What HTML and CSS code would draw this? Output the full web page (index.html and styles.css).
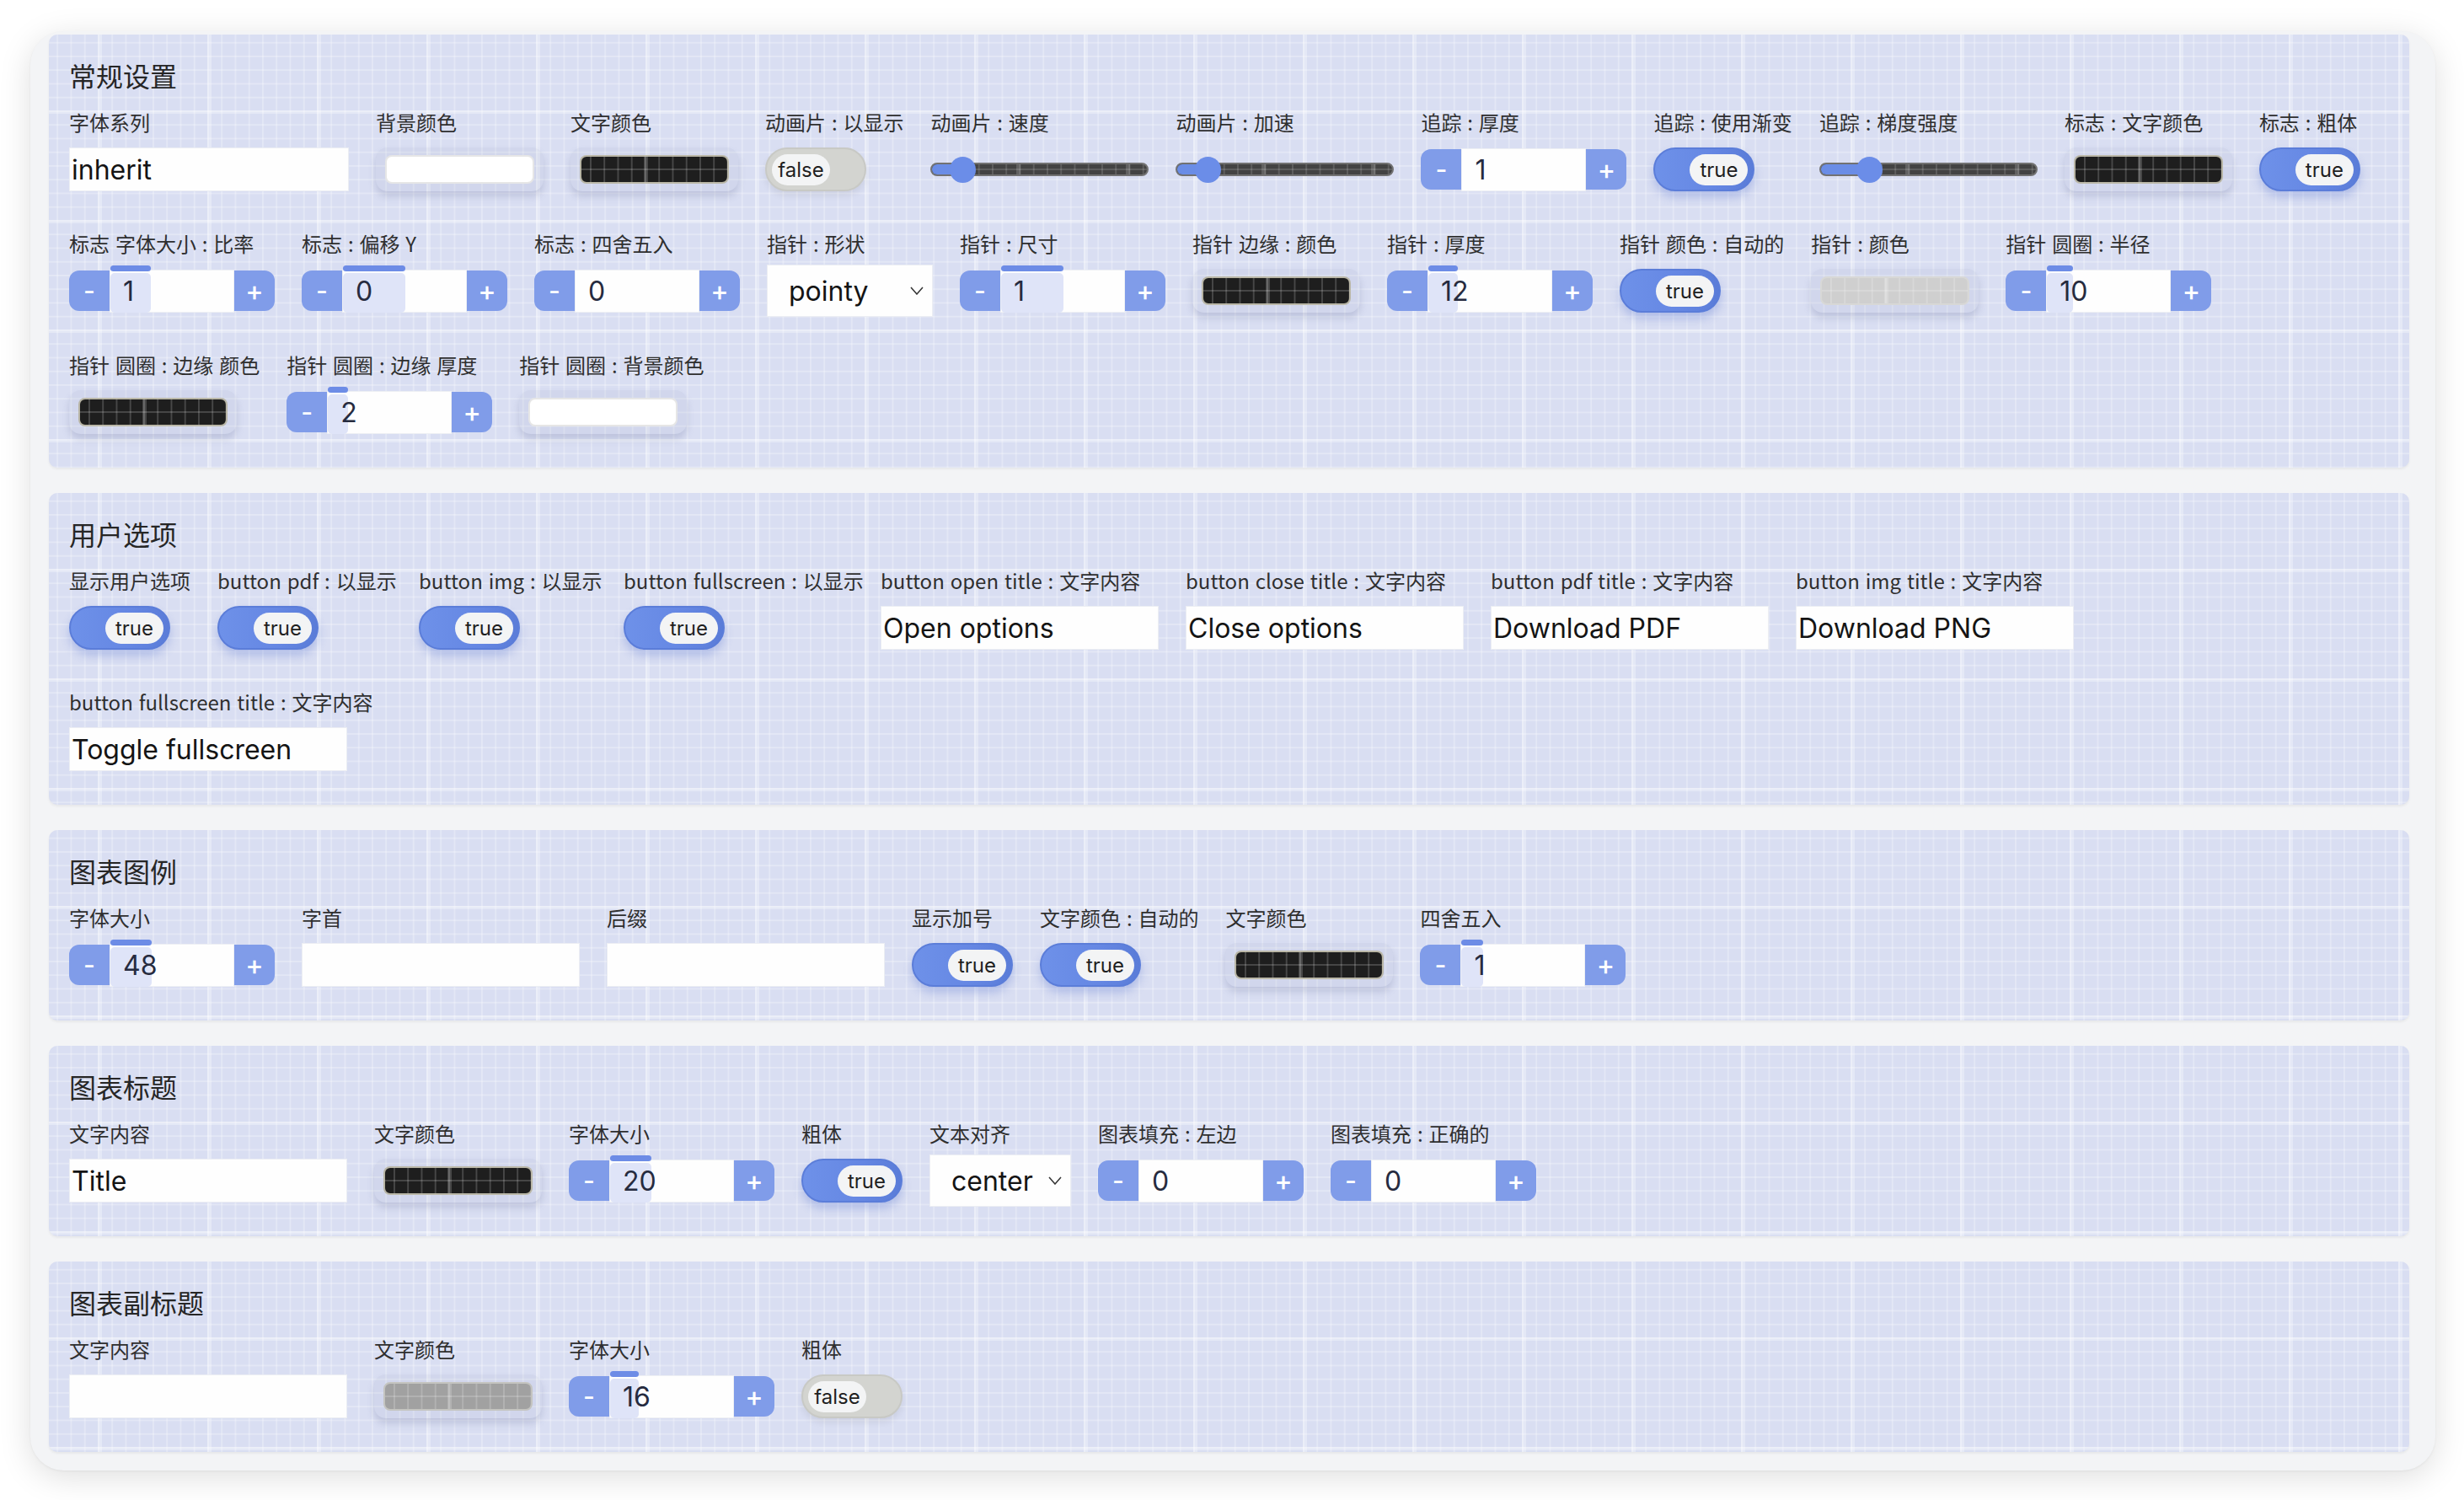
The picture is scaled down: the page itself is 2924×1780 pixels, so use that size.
FILE: index.html
```html
<!DOCTYPE html>
<html lang="zh">
<head>
<meta charset="utf-8">
<title>Settings</title>
<link rel="stylesheet" href="styles.css">
</head>
<body>
<div class="card">

  <section class="panel">
    <h2 class="panel-title">常规设置</h2>
    <div class="rows">
      <div class="row">
        <div class="field"><div class="lbl">字体系列</div><div class="ctrl"><div class="text w332">inherit</div></div></div>
        <div class="field"><div class="lbl">背景颜色</div><div class="ctrl"><div class="color"><div class="swatch white"></div></div></div></div>
        <div class="field"><div class="lbl">文字颜色</div><div class="ctrl"><div class="color"><div class="swatch dark"></div></div></div></div>
        <div class="field"><div class="lbl">动画片 : 以显示</div><div class="ctrl"><div class="toggle off"><span class="knob">false</span></div></div></div>
        <div class="field"><div class="lbl">动画片 : 速度</div><div class="ctrl"><div class="slider"><div class="track"><div class="fill" style="width:40px"></div></div><div class="thumb" style="left:23px"></div></div></div></div>
        <div class="field"><div class="lbl">动画片 : 加速</div><div class="ctrl"><div class="slider"><div class="track"><div class="fill" style="width:40px"></div></div><div class="thumb" style="left:23px"></div></div></div></div>
        <div class="field"><div class="lbl">追踪 : 厚度</div><div class="ctrl"><div class="stepper"><span class="sbtn minus">-</span><div class="num"><span class="val">1</span></div><span class="sbtn plus">+</span></div></div></div>
        <div class="field"><div class="lbl">追踪 : 使用渐变</div><div class="ctrl"><div class="toggle on"><span class="knob">true</span></div></div></div>
        <div class="field"><div class="lbl">追踪 : 梯度强度</div><div class="ctrl"><div class="slider"><div class="track"><div class="fill" style="width:60px"></div></div><div class="thumb" style="left:44px"></div></div></div></div>
        <div class="field"><div class="lbl">标志 : 文字颜色</div><div class="ctrl"><div class="color"><div class="swatch dark"></div></div></div></div>
        <div class="field"><div class="lbl">标志 : 粗体</div><div class="ctrl"><div class="toggle on"><span class="knob">true</span></div></div></div>
      </div>
      <div class="row">
        <div class="field"><div class="lbl">标志 字体大小 : 比率</div><div class="ctrl"><div class="stepper"><span class="sbtn minus">-</span><div class="num"><span class="mark" style="width:48px"></span><span class="val">1</span></div><span class="sbtn plus">+</span></div></div></div>
        <div class="field"><div class="lbl">标志 : 偏移 Y</div><div class="ctrl"><div class="stepper"><span class="sbtn minus">-</span><div class="num"><span class="mark" style="width:74px"></span><span class="val">0</span></div><span class="sbtn plus">+</span></div></div></div>
        <div class="field"><div class="lbl">标志 : 四舍五入</div><div class="ctrl"><div class="stepper"><span class="sbtn minus">-</span><div class="num"><span class="val">0</span></div><span class="sbtn plus">+</span></div></div></div>
        <div class="field"><div class="lbl">指针 : 形状</div><div class="ctrl"><div class="select w197"><span>pointy</span><svg class="chev" width="16" height="10" viewBox="0 0 16 10"><polyline points="1,1 8,9 15,1" fill="none" stroke="#333" stroke-width="1.5"/></svg></div></div></div>
        <div class="field"><div class="lbl">指针 : 尺寸</div><div class="ctrl"><div class="stepper"><span class="sbtn minus">-</span><div class="num"><span class="mark" style="width:74px"></span><span class="val">1</span></div><span class="sbtn plus">+</span></div></div></div>
        <div class="field"><div class="lbl">指针 边缘 : 颜色</div><div class="ctrl"><div class="color"><div class="swatch dark"></div></div></div></div>
        <div class="field"><div class="lbl">指针 : 厚度</div><div class="ctrl"><div class="stepper"><span class="sbtn minus">-</span><div class="num"><span class="mark" style="width:35px"></span><span class="val">12</span></div><span class="sbtn plus">+</span></div></div></div>
        <div class="field"><div class="lbl">指针 颜色 : 自动的</div><div class="ctrl"><div class="toggle on"><span class="knob">true</span></div></div></div>
        <div class="field"><div class="lbl">指针 : 颜色</div><div class="ctrl"><div class="color"><div class="swatch light"></div></div></div></div>
        <div class="field"><div class="lbl">指针 圆圈 : 半径</div><div class="ctrl"><div class="stepper"><span class="sbtn minus">-</span><div class="num"><span class="mark" style="width:31px"></span><span class="val">10</span></div><span class="sbtn plus">+</span></div></div></div>
      </div>
      <div class="row">
        <div class="field"><div class="lbl">指针 圆圈 : 边缘 颜色</div><div class="ctrl"><div class="color"><div class="swatch dark"></div></div></div></div>
        <div class="field"><div class="lbl">指针 圆圈 : 边缘 厚度</div><div class="ctrl"><div class="stepper"><span class="sbtn minus">-</span><div class="num"><span class="mark" style="width:24px"></span><span class="val">2</span></div><span class="sbtn plus">+</span></div></div></div>
        <div class="field"><div class="lbl">指针 圆圈 : 背景颜色</div><div class="ctrl"><div class="color"><div class="swatch white"></div></div></div></div>
      </div>
    </div>
  </section>

  <section class="panel">
    <h2 class="panel-title">用户选项</h2>
    <div class="rows">
      <div class="row">
        <div class="field"><div class="lbl">显示用户选项</div><div class="ctrl"><div class="toggle on"><span class="knob">true</span></div></div></div>
        <div class="field fw207"><div class="lbl">button pdf : 以显示</div><div class="ctrl"><div class="toggle on"><span class="knob">true</span></div></div></div>
        <div class="field fw211"><div class="lbl">button img : 以显示</div><div class="ctrl"><div class="toggle on"><span class="knob">true</span></div></div></div>
        <div class="field fw273"><div class="lbl">button fullscreen : 以显示</div><div class="ctrl"><div class="toggle on"><span class="knob">true</span></div></div></div>
        <div class="field fw330"><div class="lbl">button open title : 文字内容</div><div class="ctrl"><div class="text">Open options</div></div></div>
        <div class="field fw330"><div class="lbl">button close title : 文字内容</div><div class="ctrl"><div class="text">Close options</div></div></div>
        <div class="field fw330"><div class="lbl">button pdf title : 文字内容</div><div class="ctrl"><div class="text">Download PDF</div></div></div>
        <div class="field fw330"><div class="lbl">button img title : 文字内容</div><div class="ctrl"><div class="text">Download PNG</div></div></div>
      </div>
      <div class="row">
        <div class="field fw330"><div class="lbl">button fullscreen title : 文字内容</div><div class="ctrl"><div class="text">Toggle fullscreen</div></div></div>
      </div>
    </div>
  </section>

  <section class="panel">
    <h2 class="panel-title">图表图例</h2>
    <div class="rows">
      <div class="row">
        <div class="field"><div class="lbl">字体大小</div><div class="ctrl"><div class="stepper"><span class="sbtn minus">-</span><div class="num"><span class="mark" style="width:49px"></span><span class="val">48</span></div><span class="sbtn plus">+</span></div></div></div>
        <div class="field"><div class="lbl">字首</div><div class="ctrl"><div class="text"></div></div></div>
        <div class="field"><div class="lbl">后缀</div><div class="ctrl"><div class="text"></div></div></div>
        <div class="field"><div class="lbl">显示加号</div><div class="ctrl"><div class="toggle on"><span class="knob">true</span></div></div></div>
        <div class="field"><div class="lbl">文字颜色 : 自动的</div><div class="ctrl"><div class="toggle on"><span class="knob">true</span></div></div></div>
        <div class="field"><div class="lbl">文字颜色</div><div class="ctrl"><div class="color"><div class="swatch dark"></div></div></div></div>
        <div class="field"><div class="lbl">四舍五入</div><div class="ctrl"><div class="stepper"><span class="sbtn minus">-</span><div class="num"><span class="mark" style="width:26px"></span><span class="val">1</span></div><span class="sbtn plus">+</span></div></div></div>
      </div>
    </div>
  </section>

  <section class="panel">
    <h2 class="panel-title">图表标题</h2>
    <div class="rows">
      <div class="row">
        <div class="field"><div class="lbl">文字内容</div><div class="ctrl"><div class="text">Title</div></div></div>
        <div class="field"><div class="lbl">文字颜色</div><div class="ctrl"><div class="color"><div class="swatch dark"></div></div></div></div>
        <div class="field"><div class="lbl">字体大小</div><div class="ctrl"><div class="stepper"><span class="sbtn minus">-</span><div class="num"><span class="mark" style="width:49px"></span><span class="val">20</span></div><span class="sbtn plus">+</span></div></div></div>
        <div class="field"><div class="lbl">粗体</div><div class="ctrl"><div class="toggle on"><span class="knob">true</span></div></div></div>
        <div class="field"><div class="lbl">文本对齐</div><div class="ctrl"><div class="select w168"><span>center</span><svg class="chev" width="16" height="10" viewBox="0 0 16 10"><polyline points="1,1 8,9 15,1" fill="none" stroke="#333" stroke-width="1.5"/></svg></div></div></div>
        <div class="field"><div class="lbl">图表填充 : 左边</div><div class="ctrl"><div class="stepper"><span class="sbtn minus">-</span><div class="num"><span class="val">0</span></div><span class="sbtn plus">+</span></div></div></div>
        <div class="field"><div class="lbl">图表填充 : 正确的</div><div class="ctrl"><div class="stepper"><span class="sbtn minus">-</span><div class="num"><span class="val">0</span></div><span class="sbtn plus">+</span></div></div></div>
      </div>
    </div>
  </section>

  <section class="panel">
    <h2 class="panel-title">图表副标题</h2>
    <div class="rows">
      <div class="row">
        <div class="field"><div class="lbl">文字内容</div><div class="ctrl"><div class="text"></div></div></div>
        <div class="field"><div class="lbl">文字颜色</div><div class="ctrl"><div class="color"><div class="swatch mid"></div></div></div></div>
        <div class="field"><div class="lbl">字体大小</div><div class="ctrl"><div class="stepper"><span class="sbtn minus">-</span><div class="num"><span class="mark" style="width:34px"></span><span class="val">16</span></div><span class="sbtn plus">+</span></div></div></div>
        <div class="field"><div class="lbl">粗体</div><div class="ctrl"><div class="toggle off"><span class="knob">false</span></div></div></div>
      </div>
    </div>
  </section>

</div>
</body>
</html>
```

FILE: styles.css
```css
html, body {
  margin: 0;
  background: #ffffff;
}

body {
  padding: 37px 34px 35px 36px;
  font-family: "Noto Sans CJK SC", "Noto Sans", sans-serif;
  color: #333;
}

.card {
  background: #f3f4f6;
  border-radius: 40px;
  padding: 4px 31px 22px 22px;
  box-shadow: 0 8px 38px rgba(0, 0, 0, 0.13), 0 1px 3px rgba(0, 0, 0, 0.05);
  display: flex;
  flex-direction: column;
  gap: 30px;
}

.panel {
  border-radius: 10px;
  padding: 28px 24px 35px;
  background-color: #d9def2;
  background-image:
    linear-gradient(90deg, rgba(255, 255, 255, 0.3) 0 5px, transparent 5px),
    linear-gradient(180deg, rgba(255, 255, 255, 0.3) 0 4px, transparent 4px),
    linear-gradient(90deg, rgba(255, 255, 255, 0.26) 0 2px, transparent 2px),
    linear-gradient(180deg, rgba(255, 255, 255, 0.26) 0 2px, transparent 2px);
  background-size: 130px 130px, 130px 130px, 16.25px 16.25px, 16.25px 16.25px;
  background-position: 58px 90px, 58px 90px, 58px 90px, 58px 90px;
  box-shadow: 0 2px 3px rgba(0, 0, 0, 0.05);
}

.panel-title {
  margin: 0 0 20px;
  font-size: 32px;
  line-height: 40px;
  font-weight: 400;
  color: #262626;
}

.rows {
  display: flex;
  flex-direction: column;
  gap: 41px;
}

.row {
  display: flex;
  gap: 32px;
  align-items: flex-start;
}

.field {
  display: flex;
  flex-direction: column;
  gap: 9px;
  flex: none;
}

.fw207 {
  width: 207px;
}

.fw211 {
  width: 211px;
}

.fw273 {
  width: 273px;
}

.fw330 {
  width: 330px;
}

.lbl {
  font-size: 24px;
  line-height: 32px;
  height: 32px;
  color: #2f2f2f;
  white-space: pre;
  word-spacing: 1.5px;
}

.ctrl {
  height: 62px;
  display: flex;
  align-items: center;
}

/* text input */
.text {
  width: 330px;
  height: 52px;
  box-sizing: border-box;
  background: #fefefe;
  border: 1px solid #eceef3;
  padding-left: 2px;
  display: flex;
  align-items: center;
  font-family: Inter, "Noto Sans", sans-serif;
  font-size: 32px;
  color: #141414;
  white-space: nowrap;
}

.w332 {
  width: 332px;
}

/* select */
.select {
  height: 62px;
  box-sizing: border-box;
  background: #fefefe;
  border: 1px solid #eceef3;
  padding: 0 10px 0 25px;
  display: flex;
  align-items: center;
  justify-content: space-between;
  font-family: Inter, "Noto Sans", sans-serif;
  font-size: 32px;
  color: #141414;
}

.w197 {
  width: 197px;
}

.w168 {
  width: 168px;
}

.chev {
  display: block;
}

/* color input */
.color {
  width: 199px;
  height: 52px;
  box-sizing: border-box;
  padding: 9px 11px;
  border-radius: 14px;
  background: rgba(120, 130, 170, 0.08);
  box-shadow: 0 6px 9px rgba(90, 100, 145, 0.22);
}

.swatch {
  height: 100%;
  box-sizing: border-box;
  border-radius: 8px;
  border: 2px solid rgba(200, 196, 178, 0.9);
  background-image:
    linear-gradient(90deg, rgba(255, 255, 255, 0.18) 0 5px, transparent 5px),
    linear-gradient(90deg, rgba(255, 255, 255, 0.18) 0 2px, transparent 2px),
    linear-gradient(180deg, rgba(255, 255, 255, 0.18) 0 2px, transparent 2px);
  background-size: 130px 130px, 16.25px 16.25px, 16.25px 16.25px;
  background-position: 74px 0, 10px 0, 0 14px;
}

.swatch.dark {
  background-color: #1e1e1e;
}

.swatch.white {
  background-color: #ffffff;
  border-color: #e6e6e6;
}

.swatch.light {
  background-color: #cfcfcf;
  border-color: #d8d8d6;
}

.swatch.mid {
  background-color: #a1a1a1;
  border-color: #c4c4c0;
}

/* toggle */
.toggle {
  width: 120px;
  height: 52px;
  box-sizing: border-box;
  border-radius: 26px;
  padding: 0 6px;
  display: flex;
  align-items: center;
}

.toggle.on {
  background: linear-gradient(90deg, #6e91e9 0%, #6587e3 60%, #5a7cd8 100%);
  border: 2px solid #5b7dd9;
  justify-content: flex-end;
  box-shadow: 0 7px 11px rgba(80, 110, 205, 0.3);
}

.toggle.off {
  background: #d3d4d0;
  border: 2px solid #c8c9c5;
  justify-content: flex-start;
  box-shadow: 0 5px 9px rgba(0, 0, 0, 0.07);
}

.knob {
  width: 69px;
  height: 37px;
  border-radius: 19px;
  background: #f3f4f5;
  display: flex;
  align-items: center;
  justify-content: center;
  font-family: Inter, "Noto Sans", sans-serif;
  font-size: 24px;
  color: #1f1f1f;
}

/* slider */
.slider {
  width: 259px;
  height: 31px;
  position: relative;
  display: flex;
  align-items: center;
}

.track {
  width: 100%;
  height: 16px;
  box-sizing: border-box;
  border-radius: 8px;
  border: 2px solid #727272;
  background-color: #434343;
  background-image:
    linear-gradient(90deg, rgba(255, 255, 255, 0.16) 0 5px, transparent 5px),
    linear-gradient(90deg, rgba(255, 255, 255, 0.14) 0 2px, transparent 2px),
    linear-gradient(180deg, rgba(255, 255, 255, 0.14) 0 2px, transparent 2px);
  background-size: 130px 130px, 16.25px 16.25px, 16.25px 16.25px;
  background-position: 100px 0, 6px 0, 0 5px;
  overflow: hidden;
  display: flex;
}

.fill {
  height: 100%;
  background: #6a8de6;
}

.thumb {
  position: absolute;
  top: 0;
  width: 31px;
  height: 31px;
  border-radius: 50%;
  background: #6b8de8;
}

/* number stepper */
.stepper {
  display: flex;
  align-items: center;
}

.sbtn {
  width: 48px;
  height: 48px;
  background: #809ce9;
  color: #ffffff;
  display: flex;
  align-items: center;
  justify-content: center;
  font-family: Inter, "Noto Sans", sans-serif;
  font-size: 32px;
  font-weight: 500;
}

.sbtn.minus {
  border-radius: 12px 0 0 12px;
  font-size: 30px;
}

.sbtn.plus {
  border-radius: 0 12px 12px 0;
}

.num {
  width: 148px;
  height: 51px;
  box-sizing: border-box;
  background: #fefefe;
  border: 1px solid #eef0f4;
  position: relative;
  display: flex;
  align-items: center;
  padding-left: 15px;
  font-family: Inter, "Noto Sans", sans-serif;
  font-size: 32px;
  color: #262b3f;
}

.mark {
  position: absolute;
  left: 0;
  top: 3px;
  bottom: -1px;
  background: #dfe4f8;
  border-radius: 5px;
}

.mark::before {
  content: "";
  position: absolute;
  left: 0;
  right: 0;
  top: -9px;
  height: 7px;
  border-radius: 4px;
  background: #6d8ce6;
}

.val {
  position: relative;
}
```
